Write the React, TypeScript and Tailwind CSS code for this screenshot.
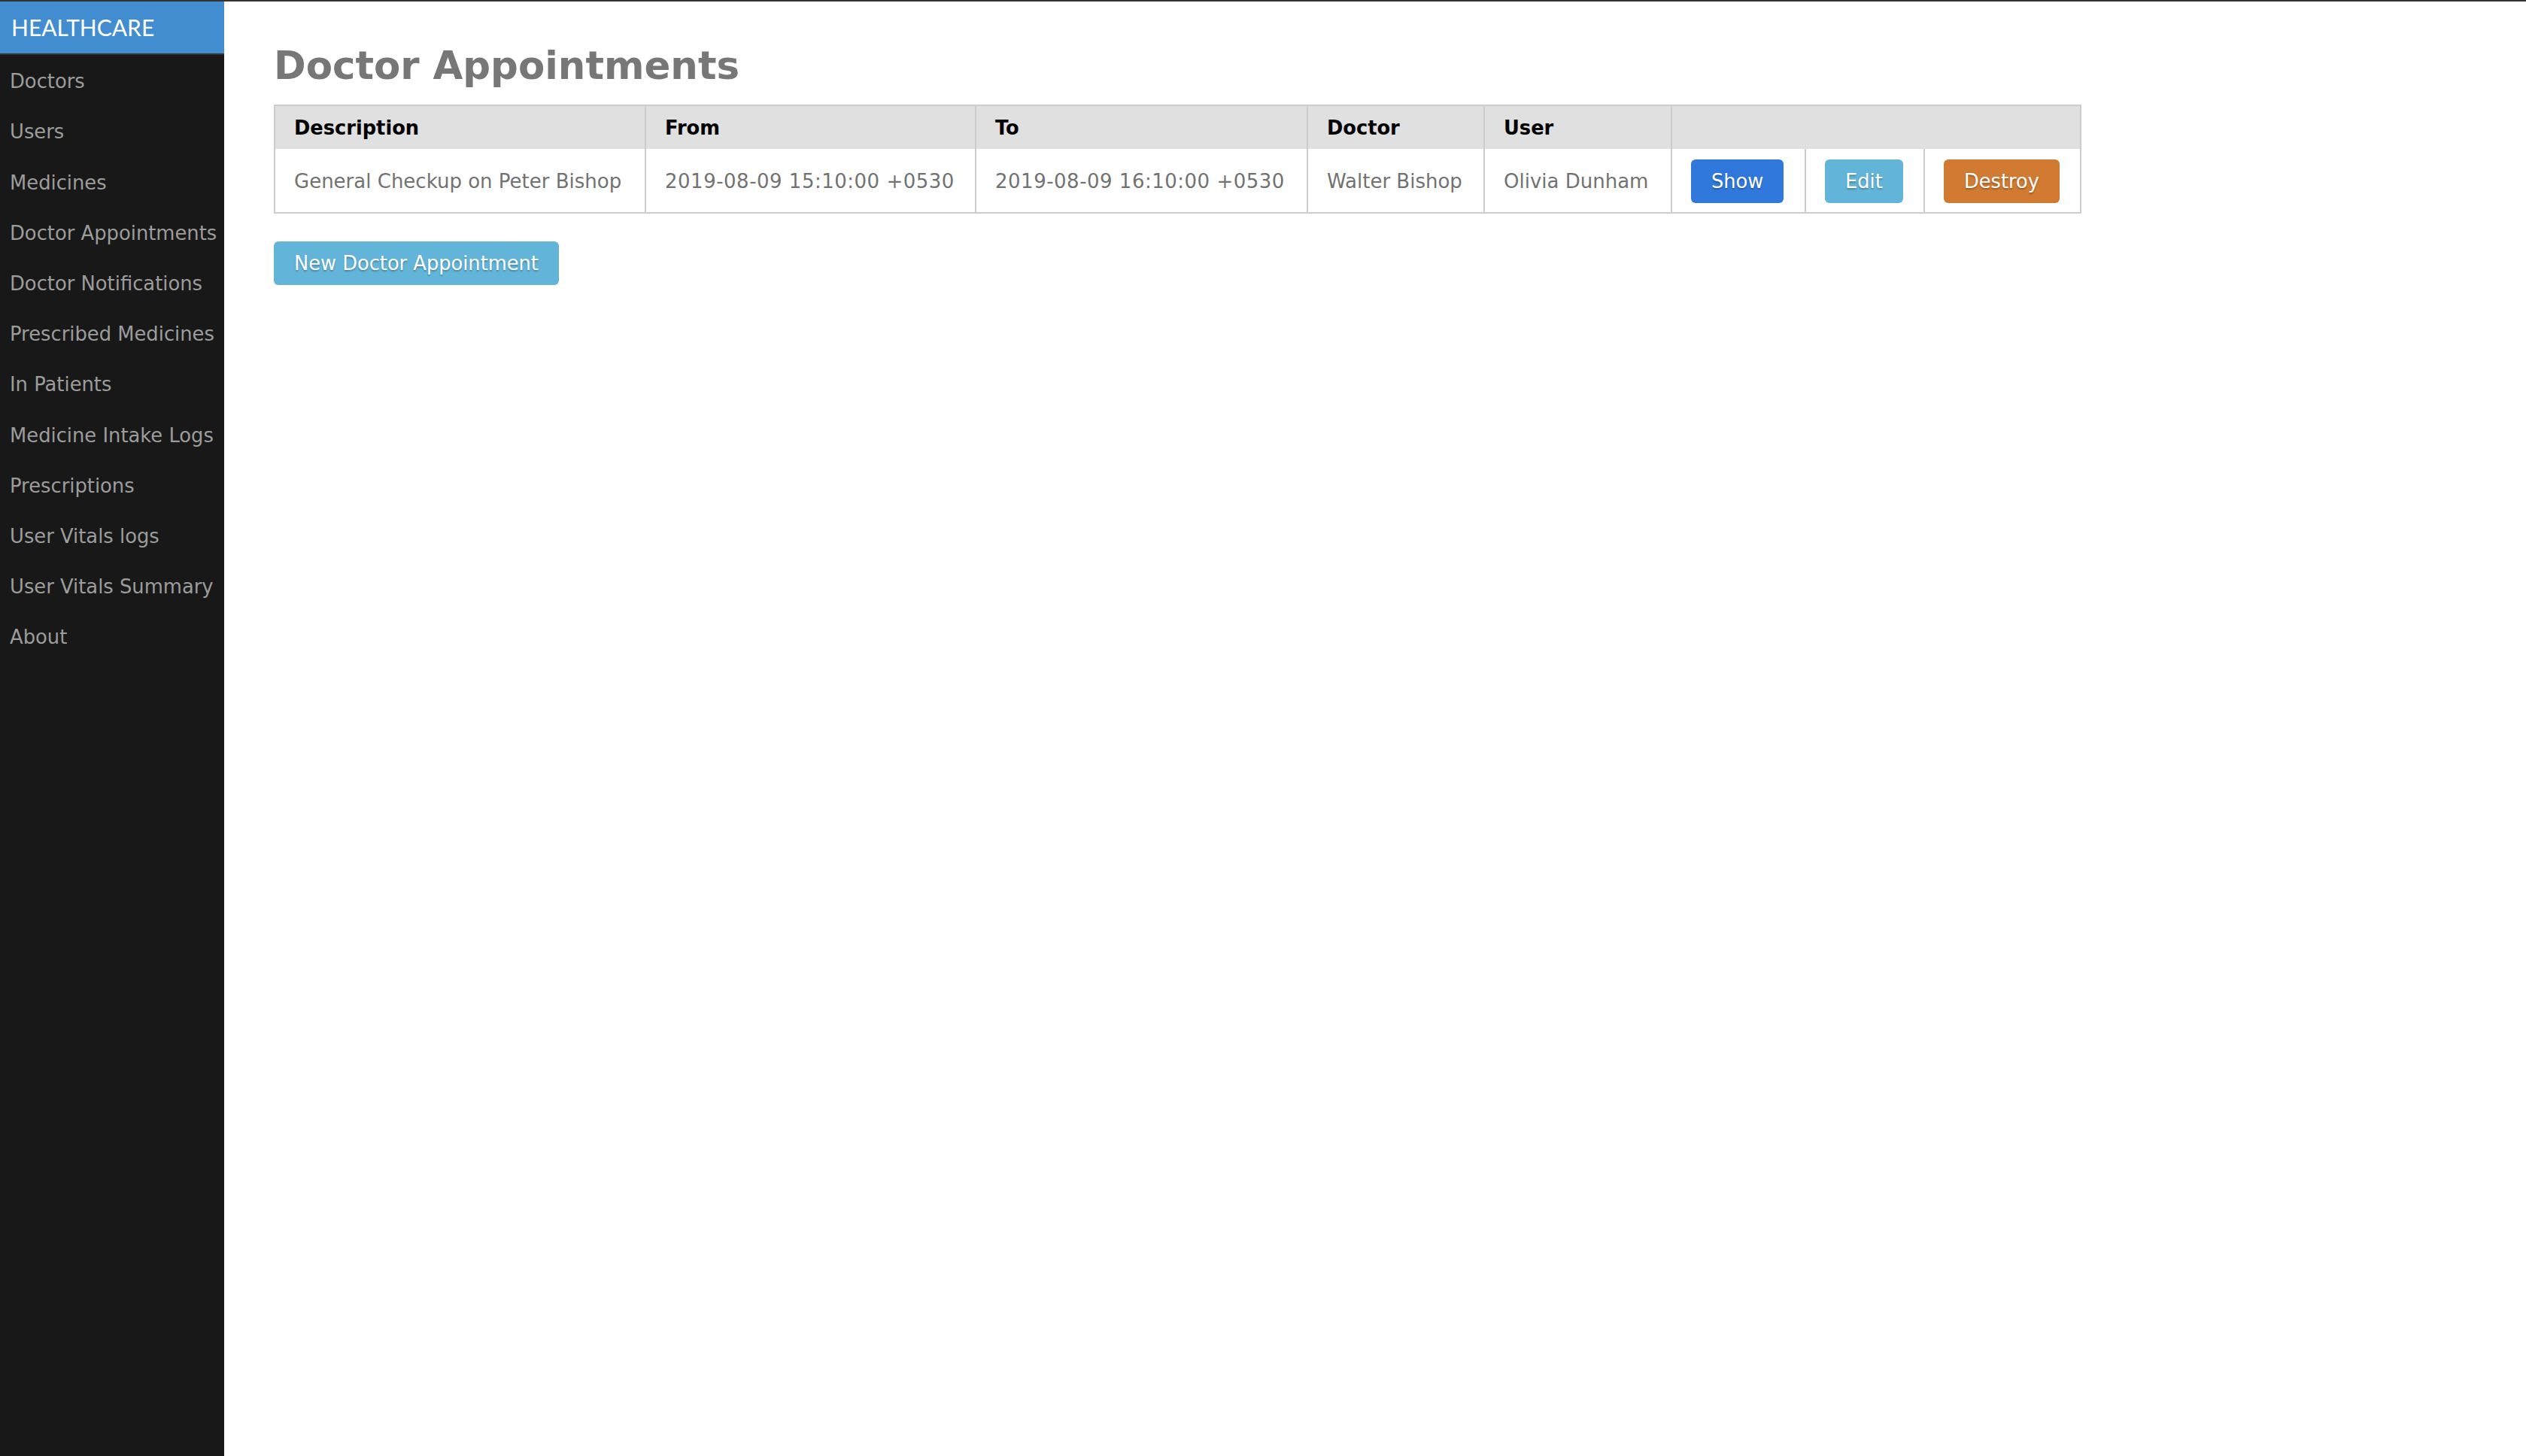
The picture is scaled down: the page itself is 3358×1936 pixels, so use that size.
import React from "react";

const navItems = [
  "Doctors",
  "Users",
  "Medicines",
  "Doctor Appointments",
  "Doctor Notifications",
  "Prescribed Medicines",
  "In Patients",
  "Medicine Intake Logs",
  "Prescriptions",
  "User Vitals logs",
  "User Vitals Summary",
  "About",
];

export default function App() {
  return (
    <div className="flex min-h-screen flex-col bg-white font-['DejaVu_Sans',Verdana,sans-serif]">
      <div className="h-[2px] w-full bg-[#333333]" />
      <div className="flex flex-1">
        <aside className="flex w-[298px] shrink-0 flex-col bg-[#181818]">
          <div className="flex h-[71px] items-center border-b-2 border-[#333333] bg-[#428dcf] pl-[15px] font-['Lato',sans-serif] text-[30px] text-white">
            HEALTHCARE
          </div>
          <nav className="flex flex-col pt-[2px]">
            {navItems.map((item) => (
              <a
                key={item}
                className="flex h-[67.2px] items-center whitespace-nowrap pl-[13px] text-[25.8px] text-[#9c9c9c]"
              >
                {item}
              </a>
            ))}
          </nav>
        </aside>
        <main className="flex-1 pl-[66px] pt-[55px]">
          <h1 className="text-[51.4px] font-bold leading-[60px] text-[#777777]">
            Doctor Appointments
          </h1>
          <table className="mt-[22px] table-fixed border-collapse border-2 border-[#cccccc] text-[25.7px]">
            <colgroup>
              <col className="w-[493px]" />
              <col className="w-[439px]" />
              <col className="w-[441px]" />
              <col className="w-[235px]" />
              <col className="w-[249px]" />
              <col className="w-[178px]" />
              <col className="w-[158px]" />
              <col className="w-[208px]" />
            </colgroup>
            <thead>
              <tr className="h-[58px] bg-[#e0e0e0]">
                {["Description", "From", "To", "Doctor", "User"].map((h) => (
                  <th
                    key={h}
                    className="whitespace-nowrap border-x-2 border-[#cccccc] px-[25px] pt-[2px] text-left font-bold text-black"
                  >
                    {h}
                  </th>
                ))}
                <th colSpan={3} className="border-x-2 border-[#cccccc]" />
              </tr>
            </thead>
            <tbody>
              <tr className="h-[85px] text-[26px] text-[#727272]">
                <td className="whitespace-nowrap border-x-2 border-[#cccccc] px-[25px] pt-[3px]">
                  General Checkup on Peter Bishop
                </td>
                <td className="whitespace-nowrap border-x-2 border-[#cccccc] px-[25px] pt-[3px] tracking-[0.5px]">
                  2019-08-09 15:10:00 +0530
                </td>
                <td className="whitespace-nowrap border-x-2 border-[#cccccc] px-[25px] pt-[3px] tracking-[0.5px]">
                  2019-08-09 16:10:00 +0530
                </td>
                <td className="whitespace-nowrap border-x-2 border-[#cccccc] px-[25px] pt-[3px]">
                  Walter Bishop
                </td>
                <td className="whitespace-nowrap border-x-2 border-[#cccccc] px-[25px] pt-[3px]">
                  Olivia Dunham
                </td>
                <td className="border-x-2 border-[#cccccc] px-[25px] pt-[2px] text-[25.7px]">
                  <a className="inline-flex h-[58px] items-center rounded-[6px] bg-[#3178dd] px-[27px] text-white [text-shadow:0_2px_2px_rgba(0,0,0,0.25)]">
                    Show
                  </a>
                </td>
                <td className="border-x-2 border-[#cccccc] px-[25px] pt-[2px] text-[25.7px]">
                  <a className="inline-flex h-[58px] items-center rounded-[6px] bg-[#62b4d9] px-[27px] text-white [text-shadow:0_2px_2px_rgba(0,0,0,0.25)]">
                    Edit
                  </a>
                </td>
                <td className="border-x-2 border-[#cccccc] px-[25px] pt-[2px] text-[25.7px]">
                  <a className="inline-flex h-[58px] items-center rounded-[6px] bg-[#d07a32] px-[27px] text-white [text-shadow:0_2px_2px_rgba(0,0,0,0.25)]">
                    Destroy
                  </a>
                </td>
              </tr>
            </tbody>
          </table>
          <a className="mt-[37px] inline-flex h-[58px] items-center rounded-[6px] bg-[#62b4d9] px-[27px] text-[25.7px] text-white [text-shadow:0_2px_2px_rgba(0,0,0,0.25)]">
            New Doctor Appointment
          </a>
        </main>
      </div>
    </div>
  );
}
